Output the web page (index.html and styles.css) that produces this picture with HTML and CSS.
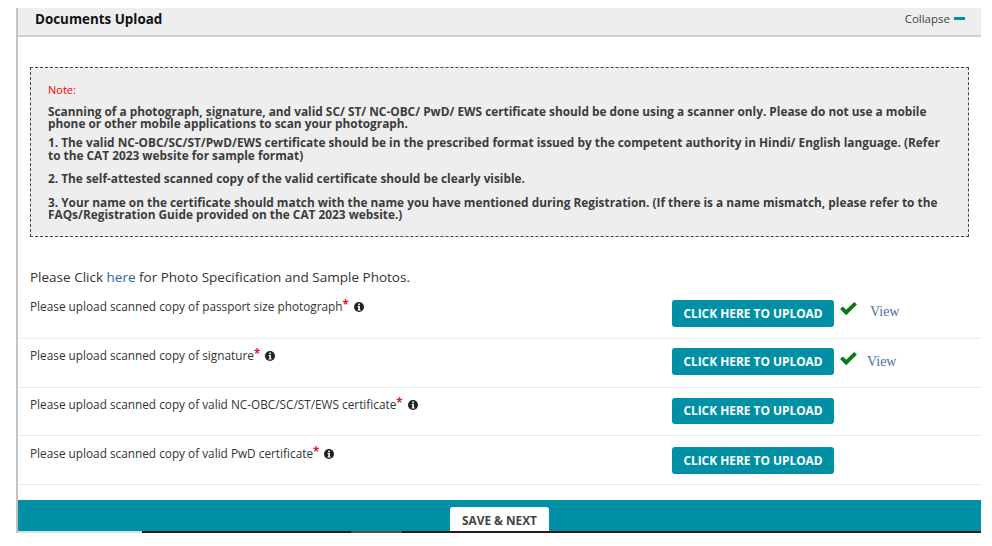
FILE: index.html
```html
<!DOCTYPE html>
<html lang="en">
<head>
<meta charset="utf-8">
<title>Documents Upload</title>
<link rel="stylesheet" href="styles.css">
</head>
<body>
<div class="top-gap"></div>
<main class="panel">
  <header class="head">
    <h2>Documents Upload</h2>
    <span class="collapse">Collapse <i class="dash"></i></span>
  </header>
  <section class="note">
    <p class="note-title">Note:</p>
    <p class="n1">Scanning of a photograph, signature, and valid SC/ ST/ NC-OBC/ PwD/ EWS certificate should be done using a scanner only. Please do not use a mobile phone or other mobile applications to scan your photograph.</p>
    <p class="n2">1. The valid NC-OBC/SC/ST/PwD/EWS certificate should be in the prescribed format issued by the competent authority in Hindi/ English language. (Refer to the CAT 2023 website for sample format)</p>
    <p class="n3">2. The self-attested scanned copy of the valid certificate should be clearly visible.</p>
    <p class="n4">3. Your name on the certificate should match with the name you have mentioned during Registration. (If there is a name mismatch, please refer to the FAQs/Registration Guide provided on the CAT 2023 website.)</p>
  </section>
  <p class="spec">Please Click <a href="#">here</a> for Photo Specification and Sample Photos.</p>
  <div class="row r1">
    <div class="label">Please upload scanned copy of passport size photograph<b>*</b> <svg class="info" viewBox="0 0 10 10"><circle cx="5" cy="5" r="5"/><rect x="4.2" y="1.6" width="1.7" height="1.6" fill="#fff"/><path d="M3.6 4h2.3v3.4h.7v1H3.6v-1h.7V5h-.7z" fill="#fff"/></svg></div>
    <div class="actions"><button>CLICK HERE TO UPLOAD</button><svg class="tick" viewBox="0 0 18 14"><path d="M1 7.5 3.6 5l3.2 3.2L14.4 .8 17 3.3 6.8 13.4z"/></svg><a class="view v1" href="#">View</a></div>
  </div>
  <div class="row r2">
    <div class="label">Please upload scanned copy of signature<b>*</b> <svg class="info" viewBox="0 0 10 10"><circle cx="5" cy="5" r="5"/><rect x="4.2" y="1.6" width="1.7" height="1.6" fill="#fff"/><path d="M3.6 4h2.3v3.4h.7v1H3.6v-1h.7V5h-.7z" fill="#fff"/></svg></div>
    <div class="actions"><button>CLICK HERE TO UPLOAD</button><svg class="tick" viewBox="0 0 18 14"><path d="M1 7.5 3.6 5l3.2 3.2L14.4 .8 17 3.3 6.8 13.4z"/></svg><a class="view v2" href="#">View</a></div>
  </div>
  <div class="row r3">
    <div class="label">Please upload scanned copy of valid NC-OBC/SC/ST/EWS certificate<b>*</b> <svg class="info" viewBox="0 0 10 10"><circle cx="5" cy="5" r="5"/><rect x="4.2" y="1.6" width="1.7" height="1.6" fill="#fff"/><path d="M3.6 4h2.3v3.4h.7v1H3.6v-1h.7V5h-.7z" fill="#fff"/></svg></div>
    <div class="actions"><button>CLICK HERE TO UPLOAD</button></div>
  </div>
  <div class="row r4">
    <div class="label">Please upload scanned copy of valid PwD certificate<b>*</b> <svg class="info" viewBox="0 0 10 10"><circle cx="5" cy="5" r="5"/><rect x="4.2" y="1.6" width="1.7" height="1.6" fill="#fff"/><path d="M3.6 4h2.3v3.4h.7v1H3.6v-1h.7V5h-.7z" fill="#fff"/></svg></div>
    <div class="actions"><button>CLICK HERE TO UPLOAD</button></div>
  </div>
  <footer class="foot"><button class="save">SAVE &amp; NEXT</button></footer>
  <div class="edge"><span class="e-light"></span><span class="e-dark"></span><span class="e-mid"></span><span class="e-rest"></span></div>
</main>
</body>
</html>
```
FILE: styles.css
```css
* { box-sizing: border-box; }
html, body { margin: 0; height: 546px; overflow: hidden; background: #fff; }
body { font-family: "Open Sans", "Noto Sans", sans-serif; color: #333; }
.top-gap { height: 8px; }
.panel { width: 965px; margin-left: 16px; border-left: 2px solid #c4c4c4; height: 525px; }
.head { height: 29px; background: #eee; border-bottom: 2px solid #cfcfcf; display: flex; justify-content: space-between; padding: 3px 16px 0 17px; }
.head h2 { margin: 0; font-size: 13.4px; font-weight: 700; color: #111; line-height: 17px; }
.collapse { font-size: 11.5px; line-height: 15px; color: #444; display: flex; align-items: center; gap: 4px; height: 14px; }
.dash { display: block; width: 11px; height: 3px; background: #0090a5; }
.note { margin: 30px 12px 0 12px; height: 170px; background: #eee; border: 1px dashed #444; padding: 15px 24px 0 17px; font-size: 11.85px; font-weight: 700; line-height: 12px; color: #3c3c3c; }
.note p { margin: 0; }
.note .note-title { color: #f00; font-weight: 400; line-height: 14px; font-size: 11px; }
.note .n1 { margin-top: 8px; }
.note .n2 { margin-top: 7px; line-height: 13px; }
.note .n3 { margin-top: 10px; }
.note .n4 { margin-top: 12px; }
.spec { margin: 31px 12px 0; font-size: 13.5px; line-height: 18px; color: #333; }
.spec a { color: #1f5fa8; text-decoration: none; }
.row { display: flex; justify-content: space-between; border-bottom: 1px solid #ececec; padding: 0 12px; }
.r1 { height: 43px; margin-top: 10px; padding-top: 2px; }
.r2 { height: 49px; padding-top: 8px; }
.r3 { height: 48px; padding-top: 8px; }
.r4 { height: 49px; padding-top: 9px; }
.label { font-size: 11.8px; line-height: 16px; color: #333; white-space: nowrap; }
.label b { color: #e8112d; font-size: 11.5px; font-weight: 700; line-height: 10px; position: relative; top: -2px; }
.info { width: 10px; height: 10px; fill: #222; margin-left: 2px; vertical-align: -1px; }
.actions { width: 297px; display: flex; align-items: flex-start; flex: none; }
.actions button { width: 162px; height: 27px; margin-top: 2px; }
.r2 .actions button { margin-top: 1px; }
.r3 .actions button { height: 26px; }
button { background: #0090a5; color: #fff; border: 0; border-radius: 3px; font: 700 11.9px/1 "Open Sans", sans-serif; padding: 0; }
.tick { width: 19px; height: 15px; fill: #0a7a0a; margin: 3px 0 0 5px; }
.r2 .tick { margin-top: 4px; }
.view { font: 14px "Liberation Serif", serif; color: #4a6fa8; text-decoration: none; margin-left: 12px; line-height: 16px; margin-top: 6px; }
.view.v2 { margin-left: 9px; margin-top: 7px; }
.foot { margin-top: 15px; height: 31px; background: #0090a5; display: flex; justify-content: center; align-items: flex-end; }
.foot button.save { width: 99px; height: 24px; padding-top: 3px; background: #fff; color: #444; border-radius: 3px 3px 0 0; font-size: 11.8px; }
.edge { height: 2px; display: flex; }
.e-light { width: 124px; background: #ddd; }
.e-dark { width: 209px; background: #2a1a14; }
.e-mid { width: 51px; background: #5a4a44; }
.e-rest { flex: 1; background: #2a1a14; }
```
